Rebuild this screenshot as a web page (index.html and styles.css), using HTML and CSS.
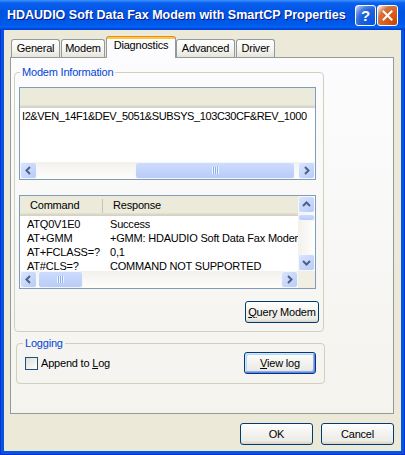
FILE: index.html
```html
<!DOCTYPE html>
<html lang="en">
<head>
    <meta charset="UTF-8">
    <title>HDAUDIO Soft Data Fax Modem with SmartCP Properties</title>
    <link rel="stylesheet" href="styles.css">
</head>
<body>
    <div class="window">
        <div class="titlebar">
            <span class="title">HDAUDIO Soft Data Fax Modem with SmartCP Properties</span>
            <div class="caption-buttons">
                <span class="caption-btn caption-help">?</span>
                <span class="caption-btn caption-close">
                    <svg width="11" height="11" viewBox="0 0 11 11">
                        <path d="M1.5 1.5 L9.5 9.5 M9.5 1.5 L1.5 9.5" stroke="#fff" stroke-width="2" stroke-linecap="square"/>
                    </svg>
                </span>
            </div>
        </div>

        <div class="frame">
            <div class="tabs">
                <div class="tab tab-general">General</div>
                <div class="tab tab-modem">Modem</div>
                <div class="tab tab-diag tab-selected">Diagnostics</div>
                <div class="tab tab-advanced">Advanced</div>
                <div class="tab tab-driver">Driver</div>
            </div>

            <div class="panel">
                <fieldset class="group group-info">
                    <legend>Modem Information</legend>

                    <!-- hardware id list, scrolled to the right -->
                    <div class="listview lv-info">
                        <div class="lv-head"></div>
                        <div class="lv-rows">
                            <div class="lv-row lv-row-id">I2&amp;VEN_14F1&amp;DEV_5051&amp;SUBSYS_103C30CF&amp;REV_1000</div>
                        </div>
                        <div class="hscroll">
                            <span class="sb-btn">
                                <svg width="9" height="9" viewBox="0 0 9 9"><path d="M6 1 L2.5 4.5 L6 8" fill="none" stroke="#4d6185" stroke-width="2"/></svg>
                            </span>
                            <span class="sb-track">
                                <span class="sb-thumb" style="margin-left: 98px; width: 160px;"></span>
                            </span>
                            <span class="sb-btn">
                                <svg width="9" height="9" viewBox="0 0 9 9"><path d="M3 1 L6.5 4.5 L3 8" fill="none" stroke="#4d6185" stroke-width="2"/></svg>
                            </span>
                        </div>
                    </div>

                    <!-- AT command log -->
                    <div class="listview lv-cmds">
                        <div class="lv-main">
                            <div class="lv-head">
                                <span class="col col-cmd">Command</span>
                                <span class="col col-resp">Response</span>
                            </div>
                            <div class="lv-rows">
                                <div class="lv-row"><span class="cell cell-cmd">ATQ0V1E0</span><span class="cell">Success</span></div>
                                <div class="lv-row"><span class="cell cell-cmd">AT+GMM</span><span class="cell">+GMM: HDAUDIO Soft Data Fax Modem with SmartCP</span></div>
                                <div class="lv-row"><span class="cell cell-cmd">AT+FCLASS=?</span><span class="cell">0,1</span></div>
                                <div class="lv-row"><span class="cell cell-cmd">AT#CLS=?</span><span class="cell">COMMAND NOT SUPPORTED</span></div>
                            </div>
                        </div>
                        <div class="vscroll">
                            <span class="sb-btn">
                                <svg width="9" height="9" viewBox="0 0 9 9"><path d="M1 6 L4.5 2.5 L8 6" fill="none" stroke="#4d6185" stroke-width="2"/></svg>
                            </span>
                            <span class="sb-track sb-track-v">
                                <span class="sb-thumb sb-thumb-v" style="margin-top: 1px; height: 7px;"></span>
                            </span>
                            <span class="sb-btn">
                                <svg width="9" height="9" viewBox="0 0 9 9"><path d="M1 3 L4.5 6.5 L8 3" fill="none" stroke="#4d6185" stroke-width="2"/></svg>
                            </span>
                        </div>
                        <div class="hscroll">
                            <span class="sb-btn">
                                <svg width="9" height="9" viewBox="0 0 9 9"><path d="M6 1 L2.5 4.5 L6 8" fill="none" stroke="#4d6185" stroke-width="2"/></svg>
                            </span>
                            <span class="sb-track">
                                <span class="sb-thumb" style="margin-left: 1px; width: 45px;"></span>
                            </span>
                            <span class="sb-btn">
                                <svg width="9" height="9" viewBox="0 0 9 9"><path d="M3 1 L6.5 4.5 L3 8" fill="none" stroke="#4d6185" stroke-width="2"/></svg>
                            </span>
                        </div>
                        <div class="sb-corner"></div>
                    </div>

                    <button class="btn btn-query"><u>Q</u>uery Modem</button>
                </fieldset>

                <fieldset class="group group-log">
                    <legend>Logging</legend>
                    <label class="check"><span class="check-box"></span><span>Append to <u>L</u>og</span></label>
                    <button class="btn btn-viewlog btn-focus"><u>V</u>iew log</button>
                </fieldset>
            </div>

            <div class="dialog-buttons">
                <button class="btn btn-dialog">OK</button>
                <button class="btn btn-dialog">Cancel</button>
            </div>
        </div>
    </div>
</body>
</html>
```

FILE: styles.css
```css
body {
    margin: 0;
    background: #ece9d8;
    font-family: "Liberation Sans", Arial, sans-serif;
    font-size: 11px;
    letter-spacing: -0.2px;
    color: #000;
}

/* window frame */
.window {
    width: 405px;
    height: 455px;
    display: flex;
    flex-direction: column;
    background: #0831d9;
}

.titlebar {
    height: 30px;
    flex: none;
    display: flex;
    align-items: center;
    padding: 0 7px;
    background: linear-gradient(#3d95ff, #0a5fee 10%, #0054e3 40%, #0058e8 80%, #0063f6 90%, #0044d8 97%, #003ad0);
}

.title {
    flex: 1;
    color: #fff;
    font-weight: bold;
    font-size: 12.5px;
    letter-spacing: 0;
    white-space: nowrap;
    text-shadow: 1px 1px #0a1883;
}

.caption-buttons {
    display: flex;
    gap: 1px;
}

.caption-btn {
    width: 21px;
    height: 21px;
    box-sizing: border-box;
    border: 1px solid #fff;
    border-radius: 3px;
    display: flex;
    align-items: center;
    justify-content: center;
    color: #fff;
}

.caption-help {
    background: radial-gradient(circle at 90% 90%, #0054e9 0%, #2263d5 55%, #4479e4 70%, #a3bbec 90%, #fff 100%);
    font-weight: bold;
    font-size: 15px;
}

.caption-close {
    background: radial-gradient(circle at 90% 90%, #cc4600 0%, #dc6527 55%, #cd7546 70%, #ffccb2 90%, #fff 100%);
}

.frame {
    flex: 1;
    display: flex;
    flex-direction: column;
    margin: 0 1px 1px;
    border: solid #0855dd;
    border-width: 0 3px 3px;
    background: #ece9d8;
}

/* tab strip */
.tabs {
    display: flex;
    align-items: flex-end;
    gap: 1px;
    height: 21px;
    margin: 6px 0 0 7px;
    position: relative;
    z-index: 1;
}

.tab {
    box-sizing: border-box;
    height: 18px;
    padding-top: 1px;
    line-height: 14px;
    text-align: center;
    border: 1px solid #919b9c;
    border-bottom: 0;
    border-radius: 3px 3px 0 0;
    background: linear-gradient(#fff, #f5f4f0 60%, #e6e4d9);
}

.tab-general { width: 49px; }
.tab-modem { width: 44px; }
.tab-diag { width: 70px; margin-right: -1px; }
.tab-advanced { width: 59px; }
.tab-driver { width: 39px; }

.tab-selected {
    height: 22px;
    margin-bottom: -1px;
    border-top-color: #e68b2c;
    background: linear-gradient(#ffc83c 0, #ffc83c 2px, #fcfcfe 2px);
}

.panel {
    box-sizing: border-box;
    width: 384px;
    height: 357px;
    margin-left: 6px;
    border: 1px solid #919b9c;
    background: linear-gradient(#fcfcfe, #f4f3ee);
    display: flex;
    flex-direction: column;
    align-items: flex-start;
}

/* group boxes */
.group {
    box-sizing: border-box;
    min-width: 0;
    border: 1px solid #d0d0bf;
    border-radius: 4px;
}

.group legend {
    color: #0046d5;
    padding: 0 2px;
    line-height: 13px;
}

.group-info {
    width: 310px;
    margin: 8px 0 0 3px;
    padding: 8px 5px 8px 4px;
    display: flex;
    flex-direction: column;
}

.group-info legend {
    margin-left: 1px;
}

.group-log {
    width: 309px;
    margin: 5px 0 0 5px;
    padding: 2px 8px 9px 8px;
    display: flex;
    align-items: center;
    justify-content: space-between;
}

.group-log legend {
    margin-left: -2px;
}

/* list views */
.listview {
    box-sizing: border-box;
    width: 297px;
    border: 1px solid #7f9db9;
    background: #fff;
}

.lv-info {
    height: 93px;
    display: flex;
    flex-direction: column;
    margin-bottom: 15px;
}

.lv-head {
    flex: none;
    display: flex;
    height: 20px;
    line-height: 19px;
    background: #ebeadb;
    box-shadow: inset 0 -1px #d6d2c2, inset 0 -2px #dcd8c9, inset 0 -3px #e2ded1;
}

.lv-rows {
    flex: 1;
    overflow: hidden;
    padding-top: 1px;
}

.lv-row {
    display: flex;
    height: 14px;
    line-height: 14px;
    white-space: nowrap;
}

.lv-row-id {
    padding-left: 2px;
    letter-spacing: -0.4px;
}

.lv-cmds {
    height: 94px;
    display: grid;
    grid-template-columns: 1fr 17px;
    grid-template-rows: 1fr 17px;
}

.lv-main {
    display: flex;
    flex-direction: column;
    min-width: 0;
    overflow: hidden;
}

.col {
    box-sizing: border-box;
    padding-left: 10px;
}

.col-cmd {
    width: 83px;
    background: linear-gradient(#c7c5b2, #c7c5b2) no-repeat right 3px / 1px 14px;
}

.cell {
    padding-left: 7px;
}

.cell-cmd {
    box-sizing: border-box;
    width: 83px;
    flex: none;
}

/* scroll bars */
.hscroll {
    display: flex;
    height: 17px;
    flex: none;
    background: linear-gradient(#f3f1ec, #fefefb);
}

.vscroll {
    display: flex;
    flex-direction: column;
    width: 17px;
    background: linear-gradient(to right, #f3f1ec, #fefefb);
}

.sb-btn {
    flex: none;
    width: 17px;
    height: 17px;
    box-sizing: border-box;
    border: 1px solid #f4f7fe;
    border-radius: 3px;
    background: linear-gradient(135deg, #d9e4fe, #b9ccf7);
    display: flex;
    align-items: center;
    justify-content: center;
}

.sb-track {
    flex: 1;
    display: flex;
}

.sb-track-v {
    flex-direction: column;
}

.sb-thumb {
    box-sizing: border-box;
    border: 1px solid #f2f6fe;
    border-radius: 3px;
    background: linear-gradient(#cddbfd, #b9ccf7);
    display: flex;
    align-items: center;
    justify-content: center;
}

.sb-thumb::after {
    content: "";
    width: 7px;
    height: 7px;
    background: repeating-linear-gradient(to right, #eef4fe 0 1px, #8cb0f8 1px 2px);
}

.sb-thumb-v::after {
    display: none;
}

.sb-corner {
    background: #f1efe4;
}

/* buttons */
.btn {
    box-sizing: border-box;
    height: 22px;
    padding: 0;
    font: inherit;
    letter-spacing: inherit;
    color: #000;
    border: 1px solid #003c74;
    border-radius: 3px;
    background: linear-gradient(#fff, #f4f4f0 40%, #ecebe6 85%, #d6d0c5);
}

.btn-focus {
    box-shadow: inset -1px -1px #6982ee, inset 1px 1px #cee7ff, inset -2px -2px #8dacf1, inset 2px 2px #bcd4f6;
}

.btn-query {
    width: 74px;
    margin-top: 12px;
    align-self: flex-end;
    margin-right: -1px;
}

.btn-viewlog {
    width: 72px;
}

.check {
    display: flex;
    align-items: center;
}

.check-box {
    width: 13px;
    height: 13px;
    box-sizing: border-box;
    margin-right: 3px;
    border: 1px solid #1c5180;
    background: linear-gradient(135deg, #dcdcd7, #fff);
}

.dialog-buttons {
    display: flex;
    justify-content: flex-end;
    gap: 8px;
    margin: 9px 7px 0 0;
}

.btn-dialog {
    width: 73px;
}
```
